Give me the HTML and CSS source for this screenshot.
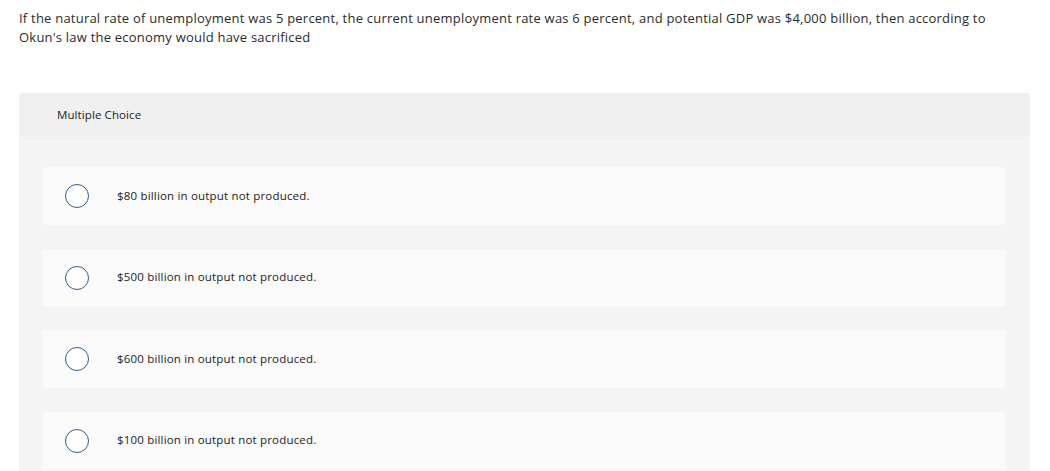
FILE: index.html
```html
<!DOCTYPE html>
<html>
<head>
<meta charset="utf-8">
<link rel="stylesheet" href="styles.css">
</head>
<body>
<div class="question">If the natural rate of unemployment was 5 percent, the current unemployment rate was 6 percent, and potential GDP was $4,000 billion, then according to Okun's law the economy would have sacrificed</div>
<div class="panel">
  <div class="panel-head">Multiple Choice</div>
  <div class="panel-body">
    <div class="option"><span class="radio"></span><span class="label">$80 billion in output not produced.</span></div>
    <div class="option"><span class="radio"></span><span class="label">$500 billion in output not produced.</span></div>
    <div class="option"><span class="radio"></span><span class="label">$600 billion in output not produced.</span></div>
    <div class="option"><span class="radio"></span><span class="label">$100 billion in output not produced.</span></div>
  </div>
</div>
</body>
</html>
```
FILE: styles.css
```css
html, body {
  margin: 0;
  padding: 0;
  background: #ffffff;
  font-family: "Open Sans", "Liberation Sans", sans-serif;
  color: #333333;
  overflow: hidden;
  height: 471px;
}
.question {
  padding: 9px 19px 0 19px;
  font-size: 13px;
  letter-spacing: 0.22px;
  line-height: 19px;
  width: 980px;
  color: #2b2b2b;
}
.panel {
  margin: 46px 20px 0 19px;
  width: 1011px;
  border-radius: 3px 3px 0 0;
  overflow: hidden;
}
.panel-head {
  background: #f0f0f0;
  height: 44px;
  display: flex;
  align-items: center;
  padding-left: 38px;
  padding-bottom: 2px;
  box-sizing: border-box;
  font-size: 11.5px;
  letter-spacing: 0.1px;
  color: #222;
}
.panel-body {
  background: #f4f4f4;
  padding: 30px 24px 30px 23px;
  display: flex;
  flex-direction: column;
  gap: 23.5px;
}
.option {
  background: #fafafa;
  border-radius: 4px;
  height: 58px;
  display: flex;
  align-items: center;
  padding-left: 23px;
}
.radio {
  width: 22px;
  height: 22px;
  border: 1.5px solid #2d5c8c;
  border-radius: 50%;
  background: #fff;
  flex: none;
}
.label {
  margin-left: 28px;
  font-size: 11.5px;
  letter-spacing: 0.18px;
  color: #222;
  padding-bottom: 2px;
}
```
